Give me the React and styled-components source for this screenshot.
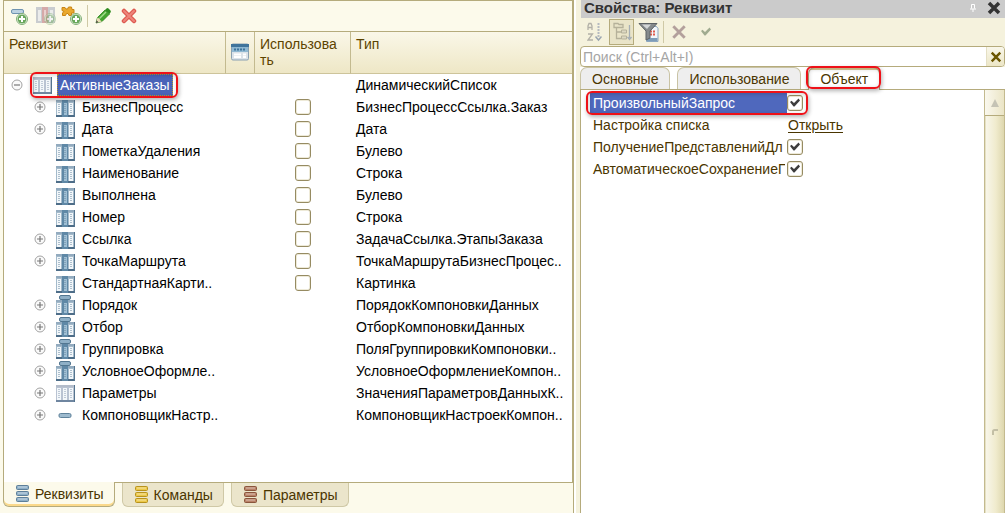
import React from "react";
import styled, { createGlobalStyle, css } from "styled-components";

const line = "#b5ab7c";
const brown = "#4a3500";

const Global = createGlobalStyle`
  *, *::before, *::after { box-sizing: border-box; }
  body { margin: 0; background: #fcfaeb; }
  body, button, input { font-family: "Liberation Sans", Arial, sans-serif; font-size: 14px; line-height: 16px; }
  button { padding: 0; border: 0; background: none; color: inherit; display: flex; align-items: center; justify-content: center; }
  svg { display: block; flex: none; }
`;

const Page = styled.main`
  display: grid;
  grid-template-columns: minmax(0, 1fr) 431px;
  min-height: 100vh;
  background: #fff;
`;

/* ---------- editor panel ---------- */
const Editor = styled.section`
  display: flex;
  flex-direction: column;
  padding: 0 0 6px 3px;
  background: #fcfaeb;
  border-right: 1px solid ${line};
`;
const EditorFrame = styled.div`
  flex: 1;
  display: flex;
  flex-direction: column;
  background: #fff;
  border: 1px solid ${line};
`;
const Toolbar = styled.div`
  display: flex;
  align-items: center;
  gap: 4px;
  height: 31px;
  padding: 0 5px;
  background: #fcfaeb;
  border-bottom: 1px solid ${line};
`;
const ToolButton = styled.button`
  width: 22px;
  height: 24px;
`;
const Separator = styled.span`
  width: 1px;
  height: 22px;
  background: #cfc9a6;
`;
const Tree = styled.table`
  width: 100%;
  table-layout: fixed;
  border-collapse: separate;
  border-spacing: 0;
`;
const Col = styled.col`
  width: ${(p) => (p.$w ? `${p.$w}px` : "auto")};
`;
const Head = styled.th`
  height: 42px;
  padding: 4px 5px;
  vertical-align: top;
  text-align: left;
  font-weight: 400;
  color: #5c4300;
  background: linear-gradient(#faf7e8, #eee7c6);
  border-bottom: 1px solid #cdc49b;
  border-right: 1px solid #c3ba8f;
  &:last-child { border-right: 0; }
`;
const HeadIcon = styled.span`
  display: flex;
  justify-content: center;
  padding-top: 7px;
`;
const Cell = styled.td`
  height: 22px;
  padding: ${(p) => (p.$center ? "0" : "0 0 0 5px")};
  color: #000;
  white-space: nowrap;
  overflow: ${(p) => (p.$open ? "visible" : "hidden")};
`;
const NodeLine = styled.div`
  display: flex;
  align-items: center;
  height: 22px;
  padding-left: ${(p) => (p.$child ? "25px" : "2px")};
`;
const Expander = styled.button`
  width: 12px;
  height: 12px;
  margin-right: 10px;
`;
const ExpanderSpace = styled.span`
  width: 22px;
`;
const NodeName = styled.span`
  padding-left: 7px;
`;
const marked = css`
  position: relative;
  &::after {
    content: "";
    position: absolute;
    inset: ${(p) => p.$inset || "-1px"};
    border: 2px solid #ee1118;
    border-radius: 6px;
    box-shadow: 1px 2px 4px rgba(0, 0, 0, 0.3), inset 1px 1px 4px rgba(0, 0, 0, 0.2);
    pointer-events: none;
  }
`;
const RootNode = styled.span`
  ${marked}
  display: flex;
  align-items: center;
  gap: 5px;
  height: 22px;
`;
const RootName = styled.span`
  height: 22px;
  padding: 2px 3px;
  line-height: 18px;
  color: #fff;
  background: #4a63b8;
  outline: 1px dotted #b89a30;
  outline-offset: -1px;
`;
const CheckWrap = styled.label`
  display: grid;
  width: 16px;
  height: 16px;
  margin: ${(p) => (p.$centered ? "0 auto" : "0")};
  > * { grid-area: 1 / 1; }
  > svg { place-self: center; pointer-events: none; }
`;
const Check = styled.input`
  appearance: none;
  width: 16px;
  height: 16px;
  margin: 0;
  background: #fff;
  border: 1px solid #968b62;
  border-radius: 3px;
  box-shadow: inset 0 0 0 1px #eeead8;
`;
const BottomTabs = styled.nav`
  display: flex;
  gap: 7px;
`;
const BottomTab = styled.button`
  height: ${(p) => (p.$active ? "25px" : "24px")};
  margin-top: ${(p) => (p.$active ? "-1px" : "0")};
  padding: 0 10px 0 12px;
  gap: 5px;
  color: ${brown};
  background: ${(p) => (p.$active ? "#fcfaeb" : "#ebe5cb")};
  border: 1px solid ${(p) => (p.$active ? line : "#cfc8a6")};
  border-top: 0;
  border-radius: 0 0 6px 6px;
  box-shadow: ${(p) => (p.$active ? "inset 0 -2px #fbd98b" : "none")};
`;

/* ---------- properties panel ---------- */
const Properties = styled.aside`
  display: flex;
  flex-direction: column;
  margin-left: 2px;
  padding-left: 4px;
  background: #f5f2dd;
`;
const TitleBar = styled.header`
  display: flex;
  align-items: center;
  gap: 11px;
  height: 18px;
  padding: 0 4px 3px 3px;
  margin-left: 1px;
  background: #cbcbcb;
  color: #333;
`;
const Title = styled.h1`
  flex: 1;
  margin: 0;
  font-size: 15px;
  line-height: 16px;
`;
const PropTools = styled.div`
  display: flex;
  align-items: center;
  height: 28px;
  padding: 0 2px;
  gap: 2px;
`;
const PropTool = styled.button`
  width: 25px;
  height: 26px;
  ${(p) => p.$on && css`
    background: #e9e4c8;
    border: 1px solid ${line};
  `}
`;
const SearchBox = styled.div`
  display: flex;
  height: 21px;
  background: #fff;
  border: 1px solid ${line};
  border-radius: 4px;
  overflow: hidden;
`;
const SearchInput = styled.input`
  flex: 1;
  min-width: 0;
  padding: 0 2px;
  border: 0;
  outline: 0;
  background: none;
  &::placeholder { color: #a5a5a5; opacity: 1; }
`;
const ClearButton = styled.button`
  width: 18px;
  background: linear-gradient(#f9f7ea, #ece6c6);
  border-left: 1px solid #e4dfc4;
`;
const Tabs = styled.nav`
  display: flex;
  align-items: flex-end;
  height: 23px;
  gap: 7px;
  background: linear-gradient(to top, ${line} 1px, #fff 1px);
`;
const Tab = styled.button`
  height: ${(p) => (p.$active ? "23px" : "22px")};
  margin-bottom: ${(p) => (p.$active ? "0" : "1px")};
  padding: 0 11px;
  color: ${brown};
  background: #eeeeee;
  border: 1px solid #c9c3a4;
  border-bottom: 0;
  border-radius: 7px 7px 0 0;
  ${(p) => p.$active && css`
    ${marked}
    background: linear-gradient(#d9ca92 2px, #fff 2px);
    border-color: ${line};
  `}
`;
const PropBody = styled.div`
  flex: 1;
  display: flex;
  background: #fff;
  border-left: 1px solid ${line};
`;
const PropList = styled.div`
  flex: 1;
  min-width: 0;
  padding: 2px 0 0 9px;
`;
const PropRow = styled.div`
  display: flex;
  align-items: center;
  width: ${(p) => (p.$selected ? "213px" : "auto")};
  height: 22px;
  color: ${brown};
  ${(p) => p.$selected && marked}
`;
const PropLabel = styled.span`
  width: 197px;
  height: 20px;
  padding: 0 0 0 3px;
  border-right: 2px solid transparent;
  line-height: 20px;
  white-space: nowrap;
  overflow: hidden;
  color: ${(p) => (p.$selected ? "#fff" : "inherit")};
  background: ${(p) => (p.$selected ? "#4f68bd" : "transparent")};
`;
const OpenLink = styled.a`
  padding-left: 1px;
  color: ${brown};
  text-underline-offset: 2px;
`;
const ScrollBar = styled.div`
  display: flex;
  flex-direction: column;
  width: 21px;
  border-left: 1px solid #c3ba8f;
  border-right: 1px solid #c3ba8f;
`;
const ScrollUp = styled.button`
  height: 26px;
  background: linear-gradient(90deg, #faf8ee, #ebe5c6);
  border-bottom: 1px solid ${line};
`;
const ScrollThumb = styled.div`
  flex: 1;
  padding: 313px 0 0 6px;
  background: linear-gradient(90deg, #f8f6ea, #f0ebcd 55%, #ded7ae);
  border-left: 1px solid #e6e1c4;
`;

/* ---------- icons ---------- */
const PlusBadge = ({ x, y, faded }) => (
  <g opacity={faded ? 0.45 : 1}>
    <circle cx={x} cy={y} r="5.5" fill="#fff" stroke="#7fae74" strokeWidth="1" />
    <circle cx={x} cy={y} r="4.5" fill="#6aa85c" />
    <path d={`M${x - 3} ${y}h6M${x} ${y - 3}v6`} stroke="#fff" strokeWidth="2" />
  </g>
);
const AddIcon = () => (
  <svg width="20" height="20" viewBox="0 0 20 20">
    <rect x="1.5" y="3.5" width="12" height="4" rx="1.5" fill="#bcd2e2" stroke="#6f93b0" />
    <PlusBadge x={12} y={13} />
  </svg>
);
const AddColumnIcon = () => (
  <svg width="20" height="20" viewBox="0 0 20 20">
    <g opacity="0.75">
      <rect x="0" y="1" width="19" height="16" fill="#b9bdc6" />
      <rect x="6" y="1" width="6" height="16" fill="#c98f92" />
      <path d="M2 4h3v11H2zM14 4h3v11h-3z" fill="#e6e8ec" />
      <path d="M8 4h2v11H8z" fill="#e4c4c5" />
    </g>
    <PlusBadge x={14} y={13} faded />
  </svg>
);
const AddPuzzleIcon = () => (
  <svg width="22" height="20" viewBox="0 0 22 20">
    <path d="M1 1.500h3l1 1.500h1.500L7.500 1h3l.5 2.500h2V7h-2.500v2.500H8L7 7.500H5.500L4.500 9.500H1.500V7L3 5.500 1 4.500z" fill="#eaa92f" stroke="#c88414" />
    <PlusBadge x={15} y={13} />
  </svg>
);
const PencilIcon = () => (
  <svg width="18" height="18" viewBox="0 0 18 18">
    <path d="M2 16l1.500-5.500L11 3l4.500 4L8 14.500z" fill="#45a530" stroke="#2e8020" strokeWidth="0.8" />
    <path d="M11 3l1.500-1.500q1-.8 2 0l2 2q.8 1 0 2L15.500 7z" fill="#2f8d20" />
    <path d="M5.500 11.500L12 5" stroke="#a4dc8e" strokeWidth="1.500" />
    <path d="M2 16l1.500-5.500 2 1.200.8 1.500L8 14.500z" fill="#e9dcb5" />
    <path d="M2 16l.6-2.400 1.800 1.700z" fill="#333" />
  </svg>
);
const DeleteIcon = () => (
  <svg width="16" height="16" viewBox="0 0 16 16">
    <path d="M3 3l10 10M13 3L3 13" stroke="#dd5a50" strokeWidth="4.500" strokeLinecap="round" />
    <path d="M3 3l10 10M13 3L3 13" stroke="#ee857b" strokeWidth="2" strokeLinecap="round" />
  </svg>
);
const TableIcon = ({ light, capped }) => {
  const y = light ? 2 : capped ? 5 : 3;
  const h = light ? 17 : 20 - y;
  return (
    <svg width="19" height="20" viewBox="0 0 19 20">
      <rect x="0" y={y} width="19" height={h} fill={light ? "#b9c3d2" : "#a3bacb"} />
      <rect x="0" y={y} width="19" height="2" fill={light ? "#b3bcca" : "#93abbf"} />
      <rect x="0" y={y + h - 2} width="19" height="2" fill={light ? "#6f86a0" : "#4d6d88"} />
      <rect x="18" y={y} width="1" height={h} fill="#55748e" />
      <path d={`M1 ${y + 3}h4v${h - 5}h-4zM13 ${y + 3}h4v${h - 5}h-4z`} fill="#f3f7fa" />
      {light ? (
        <path d={`M7 ${y + 3}h4v${h - 5}h-4z`} fill="#f3f7fa" />
      ) : (
        <React.Fragment>
          <rect x="6" y={y} width="6" height={h} fill="#5f88a6" />
          <path d={`M8 ${y + 3}h3v${h - 5}H8z`} fill="#a0bfd4" />
        </React.Fragment>
      )}
      <path d={`M3 ${y + 4}v${h - 7}M9 ${y + 4}v${h - 7}M15 ${y + 4}v${h - 7}`} stroke={light ? "#8d9fb5" : "#6888a2"} strokeWidth="2" strokeDasharray="1 1" opacity="0.5" />
      {capped && <rect x="3.5" y="0.5" width="11" height="4" rx="1.5" fill="#8fb0c7" stroke="#527690" />}
    </svg>
  );
};
const BarIcon = () => (
  <svg width="19" height="20" viewBox="0 0 19 20">
    <rect x="3" y="8.5" width="12" height="4" rx="1.5" fill="#9dbace" stroke="#5f829b" />
  </svg>
);
const ExpandIcon = ({ open }) => (
  <svg width="12" height="12" viewBox="0 0 12 12">
    <circle cx="6" cy="6" r="5" fill="#fafafa" stroke="#a3a3a3" />
    <path d={open ? "M3 6h6" : "M3 6h6M6 3v6"} stroke="#777" strokeWidth="1.200" />
  </svg>
);
const FormIcon = () => (
  <svg width="18" height="18" viewBox="0 0 18 18">
    <rect x="0.5" y="1" width="17" height="16" rx="1.5" fill="#dce3e9" stroke="#8aa0b1" />
    <rect x="0" y="1" width="18" height="3" fill="#40749b" />
    <rect x="1" y="4" width="16" height="5" fill="#8fb8d2" />
    <path d="M3 6.500h12" stroke="#3f759c" strokeDasharray="2 1" strokeWidth="2" />
    <path d="M3 11.500h7M3 14h7M12 11.500h3M12 14h3" stroke="#fff" strokeWidth="2" />
  </svg>
);
const StackIcon = ({ fill, stroke }) => (
  <svg width="14" height="18" viewBox="0 0 14 18">
    {[0.5, 6.5, 12.5].map((y) => (
      <g key={y}>
        <rect x="0.5" y={y} width="12" height="4" rx="1" fill={fill} stroke={stroke} />
        <path d={`M2 ${y + 1.5}h9`} stroke="#fff" opacity="0.5" />
      </g>
    ))}
  </svg>
);
const SortIcon = () => (
  <svg width="15" height="20" viewBox="0 0 15 20" fill="none" stroke="#b3b1a8">
    <path d="M1 8V4l1-2.500h2L5 4v4M1 5.500h4M1 12h4.500L1 18h5" strokeWidth="1.300" />
    <path d="M11.500 1v15" strokeWidth="2" strokeDasharray="2 1" stroke="#b5bac0" />
    <path d="M8.500 14.500l3 3.500 3-3.500" strokeWidth="1.500" stroke="#9aa5b0" />
  </svg>
);
const TreeIcon = () => (
  <svg width="20" height="20" viewBox="0 0 20 20" fill="none" stroke="#b5b19a">
    <path d="M2 1.500h4l1 1h4v3H2zM4.500 6v10.500H9M4.500 10H9" strokeWidth="1.300" />
    <path d="M9.500 8h5v3h-5zM9.500 14h5v3h-5z" fill="#dcd8c2" />
    <path d="M17.500 3v13M15.500 15l2 2.500 2-2.500" stroke="#a5aeb5" strokeWidth="1.300" />
  </svg>
);
const FilterIcon = () => (
  <svg width="22" height="20" viewBox="0 0 22 20">
    <path d="M8.500 4.500h10l1.500 2v13H8.500z" fill="#f2f6fa" stroke="#8ba6c0" />
    <path d="M12 9.500h6M12 12.500h6" stroke="#df5b4c" strokeWidth="2" strokeDasharray="2 1" />
    <path d="M9 17.500h10.500" stroke="#7d9cb8" strokeWidth="3" />
    <path d="M1 1.500h18L12 9v7l-4 2V9z" fill="#858a8c" stroke="#5d6264" />
    <path d="M4 2.500h9L9 7z" fill="#d3d6d7" />
  </svg>
);
const CrossIcon = ({ size, color, w }) => (
  <svg width={size} height={size} viewBox="0 0 14 14">
    <path d="M2 2l10 10M12 2L2 12" stroke={color} strokeWidth={w} />
  </svg>
);
const TickIcon = ({ color, size = 12 }) => (
  <svg width={size} height={size} viewBox="0 0 12 12">
    <path d="M1 5L2.500 3.800 5 6 9.500 1.500 11 3.500 5.500 9.500H4.500z" fill={color} />
  </svg>
);
const PinIcon = () => (
  <svg width="6" height="10" viewBox="0 0 6 10" fill="none" stroke="#fff">
    <path d="M1.500 5.500v-4h3v4M0 6h6M3 6v3" />
  </svg>
);
const UpIcon = () => (
  <svg width="10" height="10" viewBox="0 0 10 10">
    <path d="M5 1l4 8H1z" fill="#c5c3b5" />
  </svg>
);
const GripIcon = () => (
  <svg width="7" height="6" viewBox="0 0 7 6">
    <path d="M1 6V2.500q0-1.500 1.500-1.500H6" fill="none" stroke="#c3bfa5" strokeWidth="2" />
  </svg>
);

const CheckBox = ({ label, checked, centered }) => (
  <CheckWrap $centered={centered}>
    <Check type="checkbox" defaultChecked={checked} aria-label={label} />
    {checked && <TickIcon color="#3d3d3d" />}
  </CheckWrap>
);

const rows = [
  { name: "БизнесПроцесс", type: "БизнесПроцессСсылка.Заказ", expand: true, check: true },
  { name: "Дата", type: "Дата", expand: true, check: true },
  { name: "ПометкаУдаления", type: "Булево", check: true },
  { name: "Наименование", type: "Строка", check: true },
  { name: "Выполнена", type: "Булево", check: true },
  { name: "Номер", type: "Строка", check: true },
  { name: "Ссылка", type: "ЗадачаСсылка.ЭтапыЗаказа", expand: true, check: true },
  { name: "ТочкаМаршрута", type: "ТочкаМаршрутаБизнесПроцес..", expand: true, check: true },
  { name: "СтандартнаяКарти..", type: "Картинка", check: true },
  { name: "Порядок", type: "ПорядокКомпоновкиДанных", expand: true, icon: "capped" },
  { name: "Отбор", type: "ОтборКомпоновкиДанных", expand: true, icon: "capped" },
  { name: "Группировка", type: "ПоляГруппировкиКомпоновки..", expand: true, icon: "capped" },
  { name: "УсловноеОформле..", type: "УсловноеОформлениеКомпон..", expand: true, icon: "capped" },
  { name: "Параметры", type: "ЗначенияПараметровДанныхК..", expand: true, icon: "light" },
  { name: "КомпоновщикНастр..", type: "КомпоновщикНастроекКомпон..", expand: true, icon: "bar" },
];

export default function App() {
  return (
    <>
      <Global />
      <Page>
        <Editor>
          <EditorFrame>
            <Toolbar>
              <ToolButton aria-label="Добавить"><AddIcon /></ToolButton>
              <ToolButton aria-label="Добавить колонку"><AddColumnIcon /></ToolButton>
              <ToolButton aria-label="Добавить объект"><AddPuzzleIcon /></ToolButton>
              <Separator />
              <ToolButton aria-label="Изменить"><PencilIcon /></ToolButton>
              <ToolButton aria-label="Удалить"><DeleteIcon /></ToolButton>
            </Toolbar>
            <Tree>
              <colgroup>
                <Col $w={222} />
                <Col $w={29} />
                <Col $w={96} />
                <Col />
              </colgroup>
              <thead>
                <tr>
                  <Head>Реквизит</Head>
                  <Head><HeadIcon><FormIcon /></HeadIcon></Head>
                  <Head>Использова<br />ть</Head>
                  <Head>Тип</Head>
                </tr>
              </thead>
              <tbody>
                <tr>
                  <Cell $open>
                    <NodeLine>
                      <Expander aria-label="Свернуть"><ExpandIcon open /></Expander>
                      <RootNode $inset="-2px -5px -2px -3px">
                        <TableIcon light />
                        <RootName>АктивныеЗаказы</RootName>
                      </RootNode>
                    </NodeLine>
                  </Cell>
                  <Cell />
                  <Cell />
                  <Cell>ДинамическийСписок</Cell>
                </tr>
                {rows.map((r) => (
                  <tr key={r.name}>
                    <Cell>
                      <NodeLine $child>
                        {r.expand ? (
                          <Expander aria-label={`Развернуть ${r.name}`}><ExpandIcon /></Expander>
                        ) : (
                          <ExpanderSpace />
                        )}
                        {r.icon === "bar" ? <BarIcon /> : <TableIcon light={r.icon === "light"} capped={r.icon === "capped"} />}
                        <NodeName>{r.name}</NodeName>
                      </NodeLine>
                    </Cell>
                    <Cell />
                    <Cell $center>{r.check && <CheckBox centered label={r.name} />}</Cell>
                    <Cell>{r.type}</Cell>
                  </tr>
                ))}
              </tbody>
            </Tree>
          </EditorFrame>
          <BottomTabs>
            <BottomTab $active><StackIcon fill="#8fb0c8" stroke="#5d7f99" />Реквизиты</BottomTab>
            <BottomTab><StackIcon fill="#ecc94a" stroke="#b8921c" />Команды</BottomTab>
            <BottomTab><StackIcon fill="#b98268" stroke="#8a553c" />Параметры</BottomTab>
          </BottomTabs>
        </Editor>
        <Properties>
          <TitleBar>
            <Title>Свойства: Реквизит</Title>
            <button aria-label="Закрепить"><PinIcon /></button>
            <button aria-label="Закрыть"><CrossIcon size={14} color="#333" w={3.5} /></button>
          </TitleBar>
          <PropTools>
            <PropTool aria-label="Сортировать"><SortIcon /></PropTool>
            <PropTool $on aria-label="По категориям"><TreeIcon /></PropTool>
            <PropTool aria-label="Отбор"><FilterIcon /></PropTool>
            <Separator />
            <PropTool aria-label="Отменить"><CrossIcon size={16} color="#b3a09c" w={2.5} /></PropTool>
            <PropTool aria-label="Применить"><TickIcon color="#a0ab90" /></PropTool>
          </PropTools>
          <SearchBox>
            <SearchInput aria-label="Поиск" placeholder="Поиск (Ctrl+Alt+I)" />
            <ClearButton aria-label="Очистить"><CrossIcon size={12} color="#6b5600" w={2.8} /></ClearButton>
          </SearchBox>
          <Tabs>
            <Tab>Основные</Tab>
            <Tab>Использование</Tab>
            <Tab $active $inset="-2px -2px 1px -3px">Объект</Tab>
          </Tabs>
          <PropBody>
            <PropList>
              <PropRow $selected $inset="-1px -5px -1px -4px">
                <PropLabel $selected>ПроизвольныйЗапрос</PropLabel>
                <CheckBox checked label="ПроизвольныйЗапрос" />
              </PropRow>
              <PropRow>
                <PropLabel>Настройка списка</PropLabel>
                <OpenLink href="#list">Открыть</OpenLink>
              </PropRow>
              <PropRow>
                <PropLabel>ПолучениеПредставленийДл</PropLabel>
                <CheckBox checked label="ПолучениеПредставлений" />
              </PropRow>
              <PropRow>
                <PropLabel>АвтоматическоеСохранениеП</PropLabel>
                <CheckBox checked label="АвтоматическоеСохранение" />
              </PropRow>
            </PropList>
            <ScrollBar>
              <ScrollUp aria-label="Прокрутить вверх"><UpIcon /></ScrollUp>
              <ScrollThumb><GripIcon /></ScrollThumb>
            </ScrollBar>
          </PropBody>
        </Properties>
      </Page>
    </>
  );
}
